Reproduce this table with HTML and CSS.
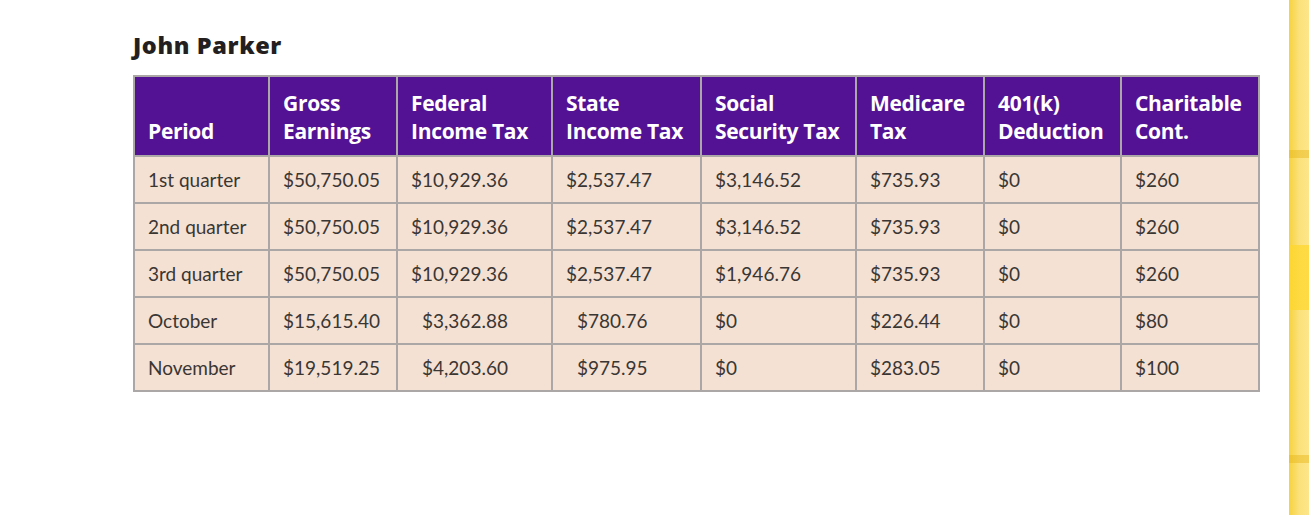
FILE: index.html
```html
<!DOCTYPE html>
<html>
<head>
<meta charset="utf-8">
<link rel="stylesheet" href="styles.css">
</head>
<body>
<div class="page">
  <main class="content">
    <h1 class="title">John Parker</h1>
    <table class="pay">
      <colgroup>
        <col class="c1"><col class="c2"><col class="c3"><col class="c4"><col class="c5"><col class="c6"><col class="c7"><col class="c8">
      </colgroup>
      <thead>
        <tr>
          <th>Period</th>
          <th>Gross<br>Earnings</th>
          <th>Federal<br>Income Tax</th>
          <th>State<br>Income Tax</th>
          <th>Social<br>Security Tax</th>
          <th>Medicare<br>Tax</th>
          <th>401(k)<br>Deduction</th>
          <th>Charitable<br>Cont.</th>
        </tr>
      </thead>
      <tbody>
        <tr><td>1st quarter</td><td>$50,750.05</td><td>$10,929.36</td><td>$2,537.47</td><td>$3,146.52</td><td>$735.93</td><td>$0</td><td>$260</td></tr>
        <tr><td>2nd quarter</td><td>$50,750.05</td><td>$10,929.36</td><td>$2,537.47</td><td>$3,146.52</td><td>$735.93</td><td>$0</td><td>$260</td></tr>
        <tr><td>3rd quarter</td><td>$50,750.05</td><td>$10,929.36</td><td>$2,537.47</td><td>$1,946.76</td><td>$735.93</td><td>$0</td><td>$260</td></tr>
        <tr><td>October</td><td>$15,615.40</td><td class="ind1">$3,362.88</td><td class="ind2">$780.76</td><td>$0</td><td>$226.44</td><td>$0</td><td>$80</td></tr>
        <tr><td>November</td><td>$19,519.25</td><td class="ind1">$4,203.60</td><td class="ind2">$975.95</td><td>$0</td><td>$283.05</td><td>$0</td><td>$100</td></tr>
      </tbody>
    </table>
  </main>
  <aside class="stripe"></aside>
</div>
</body>
</html>
```

FILE: styles.css
```css
html, body {
  margin: 0;
  padding: 0;
  background: #ffffff;
}

.page {
  display: flex;
  width: 1309px;
  height: 515px;
  overflow: hidden;
}

.content {
  flex: 1;
  padding: 30px 0 0 133px;
}

.title {
  margin: 0 0 14px 0;
  font-family: "Open Sans", "Liberation Sans", sans-serif;
  font-weight: 800;
  font-size: 23.5px;
  line-height: 31px;
  letter-spacing: 0.6px;
  color: #231f20;
}

.pay {
  border-collapse: collapse;
  table-layout: fixed;
  width: 1125px;
}

.c1 { width: 135px; }
.c2 { width: 128px; }
.c3 { width: 155px; }
.c4 { width: 149px; }
.c5 { width: 155px; }
.c6 { width: 128px; }
.c7 { width: 137px; }
.c8 { width: 138px; }

.pay th,
.pay td {
  border: 2px solid #aaa7a6;
  text-align: left;
  padding: 0 0 0 13px;
  white-space: nowrap;
}

.pay th {
  background: #521293;
  color: #ffffff;
  font-family: "Open Sans", "Liberation Sans", sans-serif;
  font-weight: 700;
  font-size: 21px;
  line-height: 28px;
  height: 80px;
  vertical-align: bottom;
  padding-bottom: 10px;
  box-sizing: border-box;
  letter-spacing: -0.3px;
}

.pay td {
  background: #f4e1d3;
  color: #3a3634;
  font-family: Lato, "Liberation Sans", sans-serif;
  font-size: 19px;
  height: 45px;
  line-height: 22px;
  vertical-align: middle;
}

.pay td.ind1 { padding-left: 24px; }
.pay td.ind2 { padding-left: 24px; }

.stripe {
  width: 20px;
  flex: none;
  background:
    linear-gradient(to bottom,
      transparent 0, transparent 150px,
      rgba(230,180,20,0.45) 150px, rgba(230,180,20,0.45) 158px,
      transparent 158px, transparent 245px,
      rgba(255,215,40,0.7) 245px, rgba(255,215,40,0.7) 310px,
      transparent 310px, transparent 455px,
      rgba(230,180,20,0.45) 455px, rgba(230,180,20,0.45) 463px,
      transparent 463px),
    linear-gradient(to right, #f6d23e 0, #fbe17a 50%, #fde68a 100%);
}
```
